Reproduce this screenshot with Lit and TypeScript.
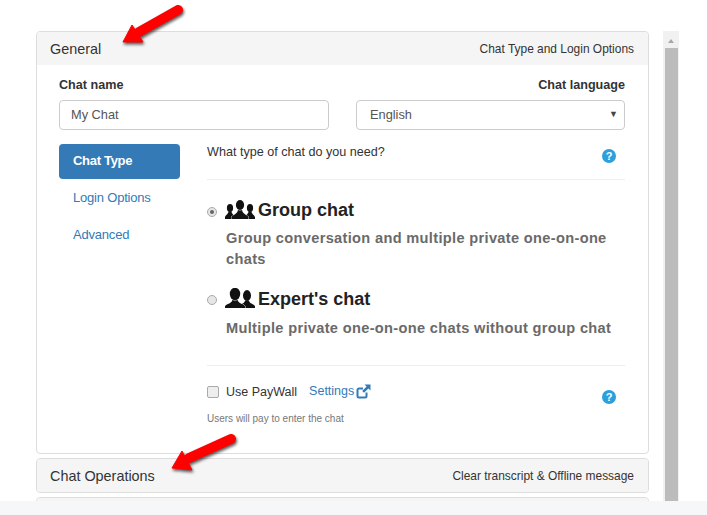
import { LitElement, html, css, svg } from "lit";
import { customElement } from "lit/decorators.js";

const person = (cx: number, headCy: number, rx: number, ry: number, w: number, b: number, outline = false) => {
  const neck = headCy + ry - 0.5;
  return svg`<g stroke=${outline ? "#fff" : "none"} stroke-width=${outline ? 0.9 : 0} paint-order="stroke">
    <path d="M${cx - w} ${b}V${b - 1.5}C${cx - w} ${b - 4} ${cx - rx * 0.5} ${b - 4.5} ${cx - rx * 0.5} ${neck}H${cx + rx * 0.5}C${cx + rx * 0.5} ${b - 4.5} ${cx + w} ${b - 4} ${cx + w} ${b - 1.5}V${b}Z" fill="#111"/>
    <ellipse cx=${cx} cy=${headCy} rx=${rx} ry=${ry} fill="#111"/>
  </g>`;
};

const groupIcon = html`<svg class="ppl" viewBox="0 0 30 19" width="30" height="19">
  ${person(5, 8, 3.1, 4, 5, 19)}${person(25, 8, 3.1, 4, 5, 19)}${person(15, 5, 4.1, 5, 8.5, 19, true)}
</svg>`;

const expertIcon = html`<svg class="ppl" viewBox="0 0 30 20" width="30" height="20">
  ${person(22, 7.5, 4, 5.4, 8, 20)}${person(10, 6, 5.2, 6.2, 10, 20, true)}
</svg>`;

const help = html`<span class="help">?</span>`;

const arrow = (cls: string, w: number, h: number, shaft: number[], head: string) => html`
  <svg class="arrow ${cls}" width="${w}" height="${h}" viewBox="0 0 ${w} ${h}">
    <line x1=${shaft[0]} y1=${shaft[1]} x2=${shaft[2]} y2=${shaft[3]} stroke="#f00" stroke-width="10" stroke-linecap="round"/>
    <polygon points="${head}" fill="#f00" stroke="#f00" stroke-width="1" stroke-linejoin="round"/>
  </svg>`;

@customElement("app-root")
export class AppRoot extends LitElement {
  static styles = css`
    :host {
      display: block;
      position: relative;
      height: 515px;
      overflow: hidden;
      background: #fff;
      font-family: "Liberation Sans", Arial, sans-serif;
      font-size: 14px;
      color: #333;
    }
    .page {
      display: flex;
      align-items: flex-start;
      padding: 31px 0 0 36px;
      gap: 14px;
    }
    .panels { width: 613px; display: flex; flex-direction: column; gap: 4px; }
    .panel {
      border: 1px solid #ddd;
      border-radius: 4px;
      box-sizing: border-box;
      overflow: hidden;
      background: #fff;
    }
    .head {
      height: 33px;
      background: #f5f5f5;
      display: flex;
      align-items: center;
      justify-content: space-between;
      padding: 0 14px 0 13px;
    }
    .head .title { font-size: 14.4px; }
    .head .sub { font-size: 11.95px; }
    .body { height: 388px; padding: 12px 23px 0 22px; box-sizing: border-box; }
    .fields { display: grid; grid-template-columns: 270px 269px; column-gap: 27px; }
    .field { display: flex; flex-direction: column; gap: 7px; }
    .field.right label { text-align: right; }
    label.lbl { font-weight: bold; font-size: 12.6px; line-height: 16px; }
    .control {
      height: 30px;
      box-sizing: border-box;
      border: 1px solid #ccc;
      border-radius: 4px;
      display: flex;
      align-items: center;
      justify-content: space-between;
      padding: 0 6px 2px 11px;
      color: #555;
      font-size: 12.8px;
    }
    .field.right .control { padding-left: 13px; }
    .caret { font-size: 9px; color: #444; }
    .main { display: flex; margin-top: 14px; }
    .nav { width: 121px; flex: none; display: flex; flex-direction: column; gap: 2px; }
    .nav a {
      height: 35px;
      box-sizing: border-box;
      padding: 0 0 2px 14px;
      display: flex;
      align-items: center;
      color: #337ab7;
      border-radius: 4px;
      font-size: 13px;
      letter-spacing: -0.2px;
    }
    .nav a.active { background: #337ab7; color: #fff; font-weight: bold; letter-spacing: -0.3px; }
    .content { margin-left: 27px; flex: 1; }
    .q {
      display: flex;
      justify-content: space-between;
      height: 35px;
      border-bottom: 1px solid #eee;
      font-size: 12.6px;
      line-height: 16px;
      padding-right: 9px;
    }
    .help {
      width: 14px;
      height: 14px;
      border-radius: 50%;
      background: #2c9fdd;
      color: #fff;
      font-size: 11px;
      font-weight: bold;
      line-height: 14px;
      text-align: center;
      flex: none;
    }
    .q .help { margin-top: 5px; }
    .opt { display: grid; grid-template-columns: 18px 1fr; }
    .opt.group { margin-top: 19px; }
    .opt.expert { margin-top: 18px; }
    .radio {
      width: 10px;
      height: 10px;
      margin-top: 8px;
      border-radius: 50%;
      border: 1px solid #aaa;
      background: #e6e6e6;
      box-sizing: border-box;
      display: flex;
      align-items: center;
      justify-content: center;
    }
    .opt.expert .radio { margin-top: 7px; }
    .radio.on::after {
      content: "";
      width: 4px;
      height: 4px;
      border-radius: 50%;
      background: #666;
    }
    .opt h3 {
      margin: 0;
      font-size: 18px;
      line-height: 22px;
      color: #222;
      display: flex;
      align-items: flex-end;
      gap: 3px;
    }
    .ppl { display: block; margin-bottom: 2px; flex: none; }
    .opt p {
      margin: 7px 0 0 1px;
      grid-column: 2;
      font-size: 14.6px;
      font-weight: bold;
      line-height: 21px;
      color: #6a6a6a;
      letter-spacing: 0.33px;
    }
    .opt.expert p { margin-top: 8px; }
    .pay {
      margin-top: 26px;
      border-top: 1px solid #eee;
      padding-top: 18px;
      position: relative;
    }
    .payrow { display: flex; align-items: center; height: 16px; font-size: 12.5px; }
    .check {
      width: 10px;
      height: 10px;
      border: 1px solid #aaa;
      border-radius: 2px;
      background: #eee;
      margin-right: 7px;
      flex: none;
    }
    .settings { color: #337ab7; margin-left: 12px; font-size: 12.5px; display: flex; align-items: center; gap: 2px; margin-top: -2px; }
    .hint { font-size: 10px; color: #777; margin-top: 13px; line-height: 12px; }
    .pay .help { position: absolute; right: 9px; top: 24px; }
    .panel.third { height: 40px; }
    .scroll { width: 16px; height: 484px; background: #f1f1f1; display: flex; flex-direction: column; align-items: center; }
    .up { width: 0; height: 0; margin: 8px 0 5px; border: 3.5px solid transparent; border-top: 0; border-bottom: 4px solid #a8a8a8; }
    .thumb { width: 13px; flex: 1; background: #bcbcbc; }
    .footer { position: absolute; left: 0; right: 0; bottom: 0; height: 14px; background: #f6f7f9; }
    .arrow { position: absolute; filter: drop-shadow(1.5px 2px 1.5px rgba(0,0,0,.65)); }
    .a1 { left: 115px; top: 0; }
    .a2 { left: 165px; top: 428px; }
  `;

  render() {
    return html`
      <div class="page">
        <div class="panels">
          <section class="panel">
            <div class="head"><span class="title">General</span><span class="sub">Chat Type and Login Options</span></div>
            <div class="body">
              <div class="fields">
                <div class="field"><label class="lbl">Chat name</label><div class="control">My Chat</div></div>
                <div class="field right"><label class="lbl">Chat language</label><div class="control">English<span class="caret">▼</span></div></div>
              </div>
              <div class="main">
                <nav class="nav">
                  <a class="active">Chat Type</a>
                  <a>Login Options</a>
                  <a>Advanced</a>
                </nav>
                <div class="content">
                  <div class="q"><span>What type of chat do you need?</span>${help}</div>
                  <div class="opt group">
                    <span class="radio on"></span>
                    <h3>${groupIcon}Group chat</h3>
                    <p>Group conversation and multiple private one-on-one chats</p>
                  </div>
                  <div class="opt expert">
                    <span class="radio"></span>
                    <h3>${expertIcon}Expert's chat</h3>
                    <p>Multiple private one-on-one chats without group chat</p>
                  </div>
                  <div class="pay">
                    <div class="payrow"><span class="check"></span>Use PayWall
                      <span class="settings">Settings
                        <svg width="15" height="15" viewBox="0 0 15 15"><path d="M10.5 8.5V12a1.5 1.5 0 0 1-1.5 1.5H3A1.5 1.5 0 0 1 1.5 12V6A1.5 1.5 0 0 1 3 4.5h4" fill="none" stroke="#337ab7" stroke-width="2"/><path d="M8.5 .5H14.5V6.5L12.4 4.4 8 8.8 6.2 7 10.6 2.6z" fill="#337ab7"/></svg>
                      </span>
                    </div>
                    <div class="hint">Users will pay to enter the chat</div>
                    ${help}
                  </div>
                </div>
              </div>
            </div>
          </section>
          <section class="panel closed">
            <div class="head"><span class="title">Chat Operations</span><span class="sub">Clear transcript &amp; Offline message</span></div>
          </section>
          <section class="panel third"><div class="head"></div></section>
        </div>
        <div class="scroll"><span class="up"></span><span class="thumb"></span></div>
      </div>
      <div class="footer"></div>
      ${arrow("a1", 80, 50, [63, 10, 24, 32], "8,42 17,25 28,42")}
      ${arrow("a2", 80, 46, [66, 11, 24, 30], "7,40 17,23 27,42")}
    `;
  }
}
